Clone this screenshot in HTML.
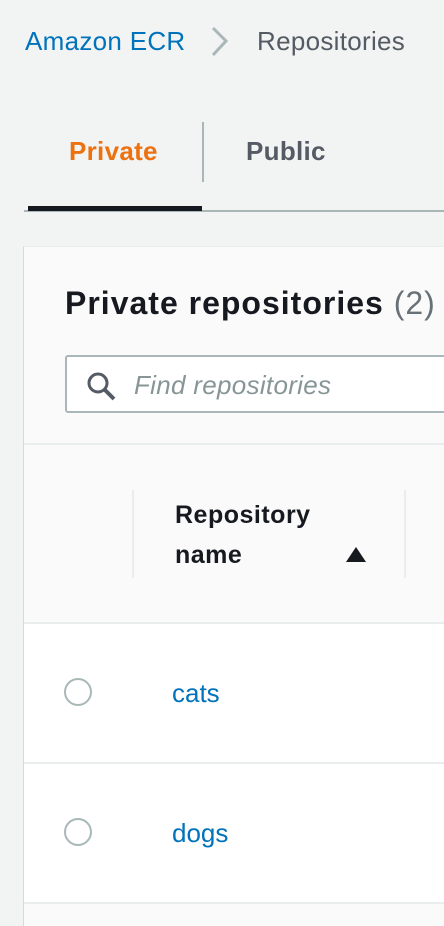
<!DOCTYPE html><html><head><style>
*{margin:0;padding:0;box-sizing:border-box}
body{width:444px;height:904px;overflow:hidden;background:#f2f3f3;font-family:"Liberation Sans",sans-serif;position:relative}
.a{position:absolute;white-space:nowrap}
</style></head><body>
<div class="a" style="left:25px;top:26px;font-size:26px;color:#0073bb;letter-spacing:0.3px">Amazon ECR</div>
<svg class="a" style="left:208px;top:26px" width="24" height="32"><path d="M5 2 L18 15 L5 29" stroke="#aab7b8" stroke-width="3" fill="none"/></svg>
<div class="a" style="left:257px;top:26px;font-size:26px;color:#545b64;letter-spacing:0.3px">Repositories</div>
<div class="a" style="left:69px;top:136px;font-size:26px;font-weight:bold;color:#ec7211;letter-spacing:0.3px">Private</div>
<div class="a" style="left:202px;top:122px;width:2px;height:60px;background:#aab7b8"></div>
<div class="a" style="left:246px;top:136px;font-size:26px;font-weight:bold;color:#545b64;letter-spacing:0.3px">Public</div>
<div class="a" style="left:24px;top:210px;width:420px;height:2px;background:#aab7b8"></div>
<div class="a" style="left:28px;top:206px;width:174px;height:5px;background:#16191f"></div>
<div class="a" style="left:23px;top:246px;width:430px;height:680px;background:#fafafa;border-left:1px solid #d5dbdb;border-top:1px solid #eaeded"></div>
<div class="a" style="left:65px;top:285px;font-size:32px;font-weight:bold;color:#16191f;letter-spacing:1px">Private repositories <span style="font-weight:normal;color:#687078">(2)</span></div>
<div class="a" style="left:65px;top:355px;width:400px;height:58px;border:2px solid #aab7b8;border-radius:3px;background:#fff"></div>
<svg class="a" style="left:85px;top:370px" width="34" height="34"><circle cx="13" cy="13" r="9" stroke="#545b64" stroke-width="3" fill="none"/><path d="M20 20 L29 29" stroke="#545b64" stroke-width="4"/></svg>
<div class="a" style="left:134px;top:370px;font-size:26px;font-style:italic;color:#879596;letter-spacing:0.3px">Find repositories</div>
<div class="a" style="left:24px;top:443px;width:420px;height:2px;background:#eaeded"></div>
<div class="a" style="left:132px;top:490px;width:2px;height:88px;background:#eaeded"></div>
<div class="a" style="left:404px;top:490px;width:2px;height:88px;background:#eaeded"></div>
<div class="a" style="left:175px;top:495px;font-size:25px;font-weight:bold;color:#16191f;line-height:40px;letter-spacing:0.5px">Repository<br>name</div>
<svg class="a" style="left:345px;top:545px" width="22" height="18"><path d="M11 2 L21 17 L1 17Z" fill="#16191f"/></svg>
<div class="a" style="left:24px;top:623px;width:420px;height:281px;background:#fff"></div>
<div class="a" style="left:24px;top:622px;width:420px;height:2px;background:#eaeded"></div>
<div class="a" style="left:24px;top:762px;width:420px;height:2px;background:#eaeded"></div>
<div class="a" style="left:24px;top:902px;width:420px;height:2px;background:#eaeded"></div>
<div class="a" style="left:64px;top:678px;width:28px;height:28px;border:2px solid #aab7b8;border-radius:50%"></div>
<div class="a" style="left:64px;top:818px;width:28px;height:28px;border:2px solid #aab7b8;border-radius:50%"></div>
<div class="a" style="left:172px;top:678px;font-size:26px;color:#0073bb">cats</div>
<div class="a" style="left:172px;top:818px;font-size:26px;color:#0073bb">dogs</div>
</body></html>
